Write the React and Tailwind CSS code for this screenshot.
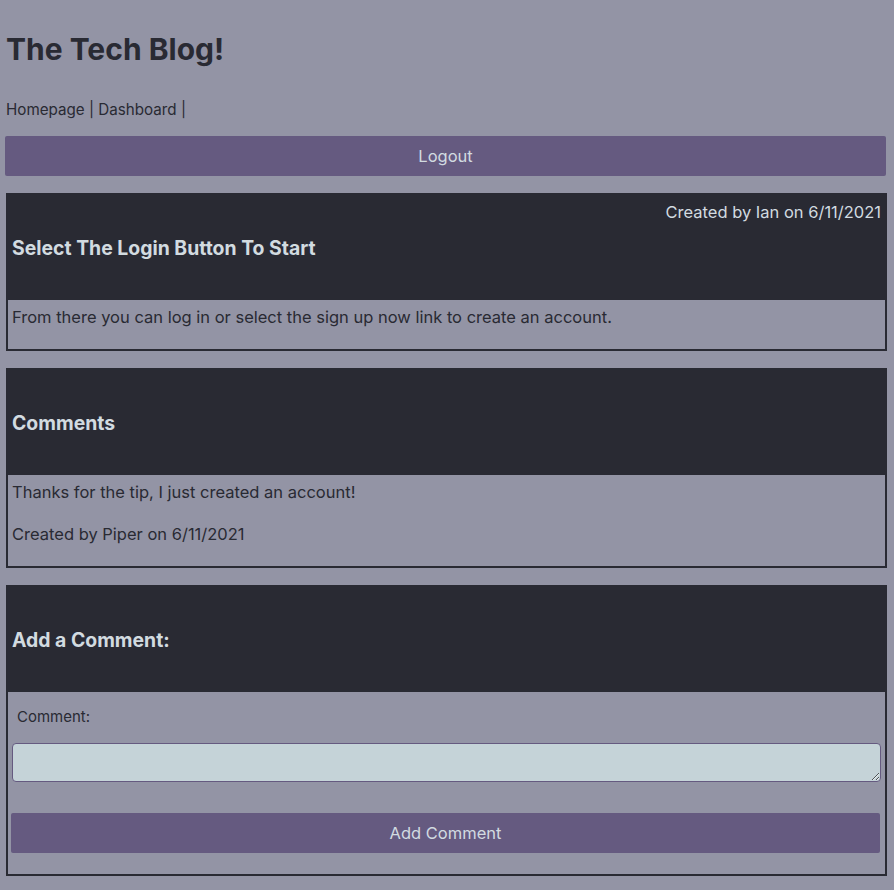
import React from "react";

// kolory z makiety
const Card = ({ meta, title, children }) => {
  return (
    <section className="ml-px border-2 border-[#292a33] bg-[#9394a5]">
      <div className="h-[105px] bg-[#292a33] px-[4px]">
        <div className="flex h-[35px] items-center justify-end text-[16.5px] text-[#d2dbe0]">
          {meta}
        </div>
        <h3 className="mt-[6px] text-[19.4px] font-bold leading-[24px] text-[#d2dbe0]">{title}</h3>
      </div>
      {children}
    </section>
  );
};

const App = () => {
  return (
    <div
      className="min-h-[890px] bg-[#9394a5] pl-[5px] pr-[7px] text-[#292a33]"
      style={{ fontFamily: "Inter, 'Noto Sans', sans-serif" }}
    >
      <header>
        <h1 className="pt-[30px] pl-px text-[30px] font-bold leading-[38px]">The Tech Blog!</h1>
        <nav className="mt-[30px] pl-px text-[15.2px] leading-[24px]">
          <a href="/">Homepage</a> | <a href="/dashboard">Dashboard</a> |
        </nav>
        <button className="mt-[14px] mr-px flex h-[40px] w-[881px] items-center justify-center rounded-[2px] bg-[#655a80] text-[16.5px] text-[#d2dbe0]">
          Logout
        </button>
      </header>

      <div className="mt-[17px] flex flex-col gap-[17px]">
        <Card meta="Created by Ian on 6/11/2021" title="Select The Login Button To Start">
          <div className="px-[4px] pt-[5px] pb-[20px] text-[16.5px] leading-[24px]">
            From there you can log in or select the sign up now link to create an account.
          </div>
        </Card>

        <Card meta="" title="Comments">
          <div className="flex flex-col gap-[18px] px-[4px] pt-[5px] pb-[20px] text-[16.5px] leading-[24px]">
            <p>Thanks for the tip, I just created an account!</p>
            <p>Created by Piper on 6/11/2021</p>
          </div>
        </Card>

        <Card meta="" title="Add a Comment:">
          <form className="px-[3px] pt-[15px] pb-[21px]">
            <label className="block pl-[6px] text-[15px] leading-[20px]">Comment:</label>
            <textarea className="mt-[16px] ml-px block h-[39px] w-[869px] rounded-[4px] border border-[#655a80] bg-[#c5d3d8]" />
            <button
              type="button"
              className="mt-[31px] flex h-[40px] w-[869px] items-center justify-center rounded-[2px] bg-[#655a80] text-[16.5px] text-[#d2dbe0]"
            >
              Add Comment
            </button>
          </form>
        </Card>
      </div>
    </div>
  );
};

export default App;
